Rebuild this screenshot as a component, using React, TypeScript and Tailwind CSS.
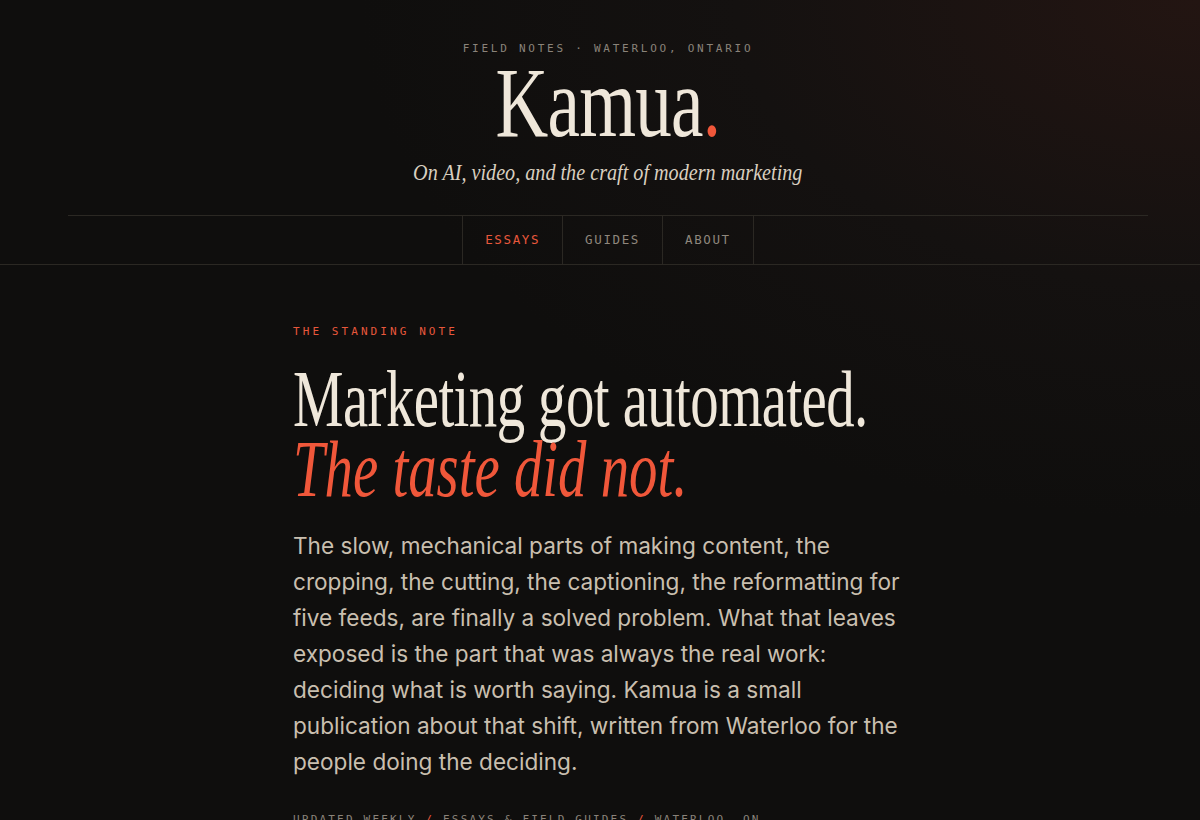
const mono = "font-['DejaVu_Sans_Mono','Liberation_Mono',monospace]";
const serif = "font-['Liberation_Serif','DejaVu_Serif',serif]";
const sans = "font-['Inter','Noto_Sans',sans-serif]";

const navItems = [
  { label: "ESSAYS", active: true },
  { label: "GUIDES", active: false },
  { label: "ABOUT", active: false },
];

const standingNote = [
  "The slow, mechanical parts of making content, the",
  "cropping, the cutting, the captioning, the reformatting for",
  "five feeds, are finally a solved problem. What that leaves",
  "exposed is the part that was always the real work:",
  "deciding what is worth saying. Kamua is a small",
  "publication about that shift, written from Waterloo for the",
  "people doing the deciding.",
];

export default function App() {
  return (
    <div className="min-h-screen bg-[#0f0e0d] bg-[radial-gradient(ellipse_70%_60%_at_100%_0%,#231512_0%,#141110_55%,#0f0e0d_100%)] text-[#efe7da]">
      <header className="text-center pt-[43px] pl-4">
        <p className={`${mono} text-[11px] leading-[12px] tracking-[0.25em] text-[#8a837a]`}>
          FIELD NOTES · WATERLOO, ONTARIO
        </p>
        <h1 className={`${serif} mt-[8px] text-[100px] leading-[80px] tracking-[-0.01em]`}>
          <span className="inline-block scale-x-[0.73] origin-center">
            Kamua<span className="text-[#f0573a]">.</span>
          </span>
        </h1>
        <p className={`${serif} italic mt-[14px] text-[24px] leading-[30px] text-[#d9cfc0]`}>
          <span className="inline-block scale-x-[0.84] origin-center">
            On AI, video, and the craft of modern marketing
          </span>
        </p>
      </header>

      <nav className="mt-[28px] border-b border-[#2b2823] pl-4">
        <div className="mx-auto max-w-[1080px] border-t border-[#2b2823] flex justify-center">
          <div className="flex border-l border-[#2b2823]">
            {navItems.map((item) => (
              <a
                key={item.label}
                className={`${mono} h-[48px] flex items-center px-[22px] border-r border-[#2b2823] text-[12.5px] tracking-[0.13em] ${
                  item.active ? "text-[#e8583c]" : "text-[#8f877d]"
                }`}
              >
                {item.label}
              </a>
            ))}
          </div>
        </div>
      </nav>

      <main className="mx-auto w-[614px] pt-[60px]">
        <p className={`${mono} text-[11px] leading-[14px] tracking-[0.28em] text-[#e8583c]`}>THE STANDING NOTE</p>

        <h2 className={`${serif} mt-[25px] text-[80px] leading-[70px] whitespace-nowrap`}>
          <span className="block scale-x-[0.71] origin-left tracking-[-0.01em]">Marketing got automated.</span>
          <span className="block scale-x-[0.71] origin-left italic text-[#f0573a]">The taste did not.</span>
        </h2>

        <p className={`${sans} mt-[24px] text-[22.6px] leading-[36px] text-[#c9bfaf] whitespace-nowrap`}>
          {standingNote.map((line) => (
            <span key={line} className="block">
              {line}
            </span>
          ))}
        </p>

        <p className={`${mono} mt-[33px] pb-10 text-[11px] leading-[14px] tracking-[0.2em] text-[#8a837a]`}>
          UPDATED WEEKLY <span className="text-[#e8583c]">/</span> ESSAYS &amp; FIELD GUIDES{" "}
          <span className="text-[#e8583c]">/</span> WATERLOO, ON
        </p>
      </main>
    </div>
  );
}
